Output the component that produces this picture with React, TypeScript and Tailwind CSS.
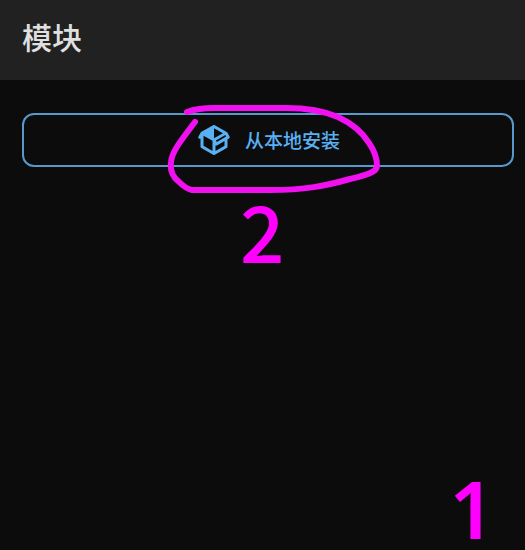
function PackageIcon() {
  return (
    <svg className="w-9 h-9 shrink-0" viewBox="0 0 24 24" fill="currentColor" aria-hidden="true">
      <path d="M2,10.96C1.5,10.68 1.35,10.07 1.63,9.59L3.13,7C3.24,6.8 3.41,6.66 3.6,6.58L11.43,2.18C11.59,2.06 11.79,2 12,2C12.21,2 12.41,2.06 12.57,2.18L20.47,6.62C20.66,6.72 20.82,6.88 20.91,7.08L22.36,9.6C22.64,10.08 22.47,10.69 22,10.96L21,11.54V16.5C21,16.88 20.79,17.21 20.47,17.38L12.57,21.82C12.41,21.94 12.21,22 12,22C11.79,22 11.59,21.94 11.43,21.82L3.53,17.38C3.21,17.21 3,16.88 3,16.5V10.96C2.7,11.13 2.32,11.14 2,10.96M12,4.15V10.85L17.96,7.5L12,4.15M5,15.91L11,19.29V12.58L5,9.21V15.91M19,15.91V12.69L14,15.59C13.67,15.77 13.3,15.76 13,15.6V19.29L19,15.91M13.85,13.36L20.13,9.73L19.55,8.72L13.27,12.35L13.85,13.36Z" />
    </svg>
  );
}

// Hand-drawn loop around the install button
function MarkerLoop() {
  return (
    <svg
      className="absolute left-1/2 -top-5 -ml-[108px] w-[230px] h-[105px] pointer-events-none text-[#f010f0]"
      viewBox="0 0 230 105"
      fill="none"
      stroke="currentColor"
      strokeWidth={6}
      strokeLinecap="round"
      strokeLinejoin="round"
      aria-hidden="true"
    >
      <path d="M27 19 C35 16 43 15 54 15 H126 C148 15 164 18 178 24 C193 31 203 40 209 50 C214 57 217 65 217 73 C217 79 207 82 190 86 C165 93 145 97 110 97 H32 C27 96 22 92 18 88 C12 83 10 77 11 69 C12 59 19 50 35 29" />
    </svg>
  );
}

export default function App() {
  return (
    <div className="relative min-h-screen overflow-hidden bg-[#0c0c0c] font-['Noto_Sans_CJK_SC',sans-serif]">
      <header className="flex items-center h-20 px-[22px] pb-2 bg-[#212121]">
        <h1 className="text-[30px] leading-10 font-medium text-[#e0e0e0]">模块</h1>
      </header>

      <main className="pt-[33px] pl-[22px] pr-[11px]">
        <div className="relative">
          <button
            type="button"
            className="flex items-center justify-center gap-[13px] w-full h-[54px] rounded-xl border-2 border-[#5998cc] text-[#59b0f3]"
          >
            <PackageIcon />
            <span className="text-[19px] leading-6 font-medium">从本地安装</span>
          </button>
          <MarkerLoop />
          <span className="absolute left-1/2 top-[76px] -ml-7 text-[78px] leading-[80px] font-medium text-[#ff00ff]">
            2
          </span>
        </div>
      </main>

      <span className="absolute right-[30px] bottom-0.5 text-[80px] leading-[80px] font-semibold font-['Noto_Sans',sans-serif] text-[#ff00ff]">
        1
      </span>
    </div>
  );
}
